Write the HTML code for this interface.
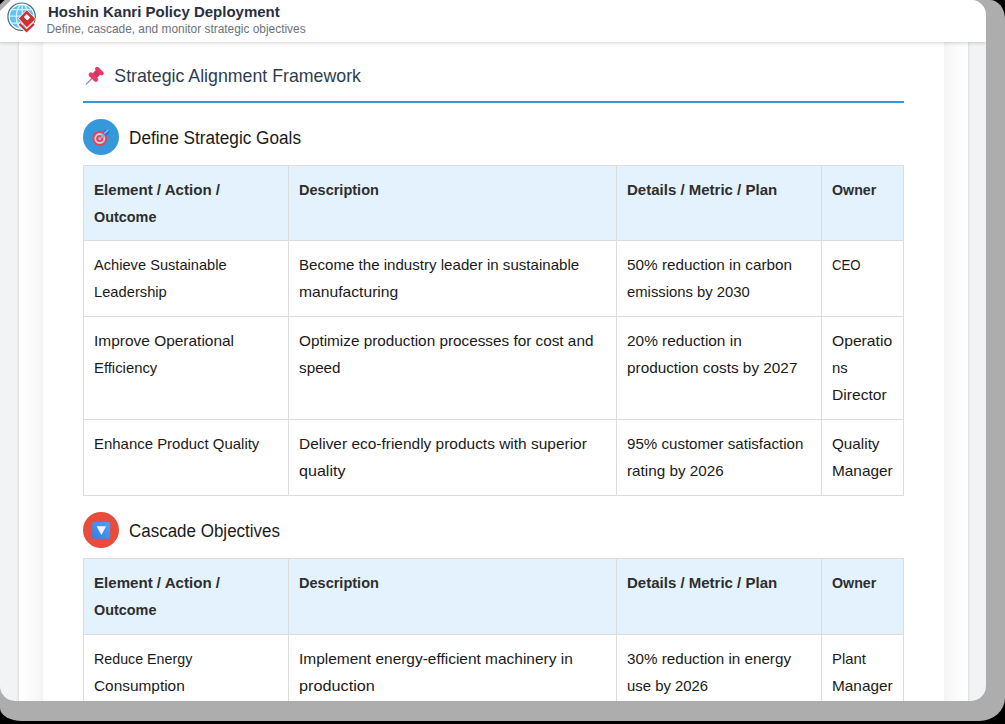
<!DOCTYPE html>
<html>
<head>
<meta charset="utf-8">
<style>
html,body{margin:0;padding:0;}
body{width:1005px;height:724px;overflow:hidden;background:#000;position:relative;font-family:"Liberation Sans",sans-serif;}
.shadow{position:absolute;left:0;top:0;width:1005px;height:720.7px;background:#adadad;border-radius:0 15px 26px 22px / 0 19px 23px 13px;}
.win{position:absolute;left:0;top:0;width:986px;height:700.7px;border-radius:0 15px 15px 15px;overflow:hidden;background:#f2f3f5;}
.pg{position:absolute;left:0;top:0;width:986px;height:700px;}
.hdr{position:absolute;left:0;top:0;width:986px;height:42px;background:#fff;box-shadow:0 1px 0 rgba(15,23,42,.02),0 2px 3px rgba(15,23,42,.12);z-index:5;}
.logo{position:absolute;left:5px;top:0;width:35px;height:35px;}
.t1{position:absolute;left:48px;top:1.5px;font-weight:bold;font-size:15.5px;line-height:20px;transform:scaleX(0.968);transform-origin:0 0;color:#283040;white-space:nowrap;}
.t2{position:absolute;left:46.5px;top:22px;font-size:11.9px;line-height:14px;color:#6b7280;white-space:nowrap;}
.cont{position:absolute;left:19px;top:0;width:949px;height:720px;background:#fff;box-shadow:0 0 3px rgba(0,0,0,.17);overflow:hidden;}
.card{position:absolute;left:24px;top:-100px;width:901px;height:900px;background:#fff;box-shadow:0 0 26px rgba(0,0,0,.09);}
.abs{position:absolute;white-space:nowrap;}
.stitle{left:114.3px;top:64px;font-size:17.75px;line-height:24px;color:#2c3e50;}
.line{position:absolute;left:83px;top:101px;width:821px;height:2px;background:#3498db;}
.circ{position:absolute;left:83px;width:36px;height:36px;border-radius:50%;}
.h3{left:129.3px;font-size:17.6px;line-height:24px;color:#1a1a1a;transform:scaleX(0.965);transform-origin:0 0;}
table{position:absolute;left:83px;width:820px;border-collapse:collapse;table-layout:fixed;font-size:15px;line-height:27px;color:#1a1a1a;}
td,th{border:1px solid #dcdcdc;padding:10px 10px 10px 10px;vertical-align:top;text-align:left;white-space:nowrap;}
th{background:#e3f2fd;font-weight:bold;color:#2e2e2e;}
tbody td{padding-bottom:11px;}
.l{display:inline-block;transform-origin:0 50%;}
.t2b th{padding-bottom:11px;}
</style>
</head>
<body>
<div class="shadow"></div>
<div class="win">
 <div class="pg">
  <div class="cont">
    <div class="card"></div>
  </div>
  <div class="hdr">
    <svg class="abs" style="left:0;top:0" width="40" height="40" viewBox="0 0 40 40">
      <defs><clipPath id="gc"><circle cx="21.6" cy="16.7" r="11.8"/></clipPath></defs>
      <circle cx="21.6" cy="16.7" r="13.7" fill="#fff" stroke="#3b7188" stroke-width="1.2"/>
      <g clip-path="url(#gc)">
        <rect x="8" y="3" width="28" height="28" fill="#62c4f0"/>
        <g stroke="#d2eefb" stroke-width="1.3" fill="none">
          <line x1="8" y1="9.6" x2="36" y2="9.6"/>
          <line x1="8" y1="16.2" x2="36" y2="16.2"/>
          <line x1="8" y1="23.1" x2="36" y2="23.1"/>
          <ellipse cx="22.3" cy="16.7" rx="6" ry="12"/>
          <line x1="22.3" y1="3" x2="22.3" y2="31"/>
        </g>
      </g>
      <path d="M26.8 9.5 L36.1 18.9 L26.8 28 L18 18.6 Z" fill="#fff"/>
      <path d="M26.8 10.3 L35.4 18.9 L26.8 27.3 L18.8 18.6 Z M26.8 14.1 L30.3 17.6 L27.3 20.6 L23.8 17.1 Z" fill="#d32f2f" fill-rule="evenodd"/>
      <path d="M18.8 23.4 L26.6 31.6 L34.6 23.4" fill="none" stroke="#fff" stroke-width="3.4" stroke-linejoin="miter"/>
      <path d="M19.5 23.9 L26.6 30.9 L33.9 23.9" fill="none" stroke="#d32f2f" stroke-width="2.2" stroke-linejoin="miter"/>
    </svg>
    <div class="t1 abs">Hoshin Kanri Policy Deployment</div>
    <div class="t2 abs">Define, cascade, and monitor strategic objectives</div>
  </div>

  <svg class="abs" style="left:82px;top:62px" width="26" height="26" viewBox="0 0 26 26">
    <g transform="translate(11.3 15.2) rotate(45)">
      <line x1="0" y1="2" x2="0" y2="9.8" stroke="#8f8ba8" stroke-width="1.4" stroke-linecap="round"/>
      <rect x="-3.2" y="-7.6" width="6.4" height="6" fill="#c93a62"/>
      <rect x="-5.8" y="-2.3" width="11.6" height="4.4" rx="2.2" fill="#ee3a6c"/>
      <rect x="-5.3" y="-10.6" width="10.6" height="4" rx="2" fill="#f0346a"/>
    </g>
  </svg>
  <div class="abs stitle">Strategic Alignment Framework</div>
  <div class="line"></div>

  <div class="circ" style="top:119px;background:#3498db"></div>
  <svg class="abs" style="left:83px;top:119px" width="36" height="36" viewBox="83 119 36 36">
    <circle cx="99.8" cy="138.5" r="7.4" fill="#e8405a"/>
    <circle cx="99.8" cy="138.5" r="5.4" fill="#dccfe2"/>
    <circle cx="99.8" cy="138.5" r="3.6" fill="#e8405a"/>
    <circle cx="99.8" cy="138.5" r="1.6" fill="#c8bcc8"/>
    <line x1="100" y1="138.3" x2="103" y2="135.3" stroke="#8a96b0" stroke-width="1"/>
    <path d="M103.4 131.6 L105.2 129.4 L107.2 130.4 L109.6 131.4 L109 133.6 L107 135.4 L104.6 134.2 Z" fill="#2f72e0"/>
    <line x1="104.2" y1="133.6" x2="108.2" y2="130" stroke="#7fd0f8" stroke-width="1.3"/>
    <circle cx="102.6" cy="136" r="1.9" fill="#5fc0f2"/>
  </svg>
  <div class="abs h3" style="top:126px;transform:scaleX(0.977)">Define Strategic Goals</div>

  <table style="top:165px">
   <colgroup><col style="width:205px"><col style="width:328px"><col style="width:205px"><col style="width:82px"></colgroup>
   <thead><tr><th><span class="l" style="transform:scaleX(1.0056)">Element / Action /</span><br><span class="l" style="transform:scaleX(0.9600)">Outcome</span></th><th><span class="l" style="transform:scaleX(0.9679)">Description</span></th><th><span class="l" style="transform:scaleX(1.0007)">Details / Metric / Plan</span></th><th><span class="l" style="transform:scaleX(0.9489)">Owner</span></th></tr></thead>
   <tbody>
    <tr><td><span class="l" style="transform:scaleX(0.9756)">Achieve Sustainable</span><br><span class="l" style="transform:scaleX(0.9808)">Leadership</span></td><td><span class="l" style="transform:scaleX(1.0061)">Become the industry leader in sustainable</span><br><span class="l" style="transform:scaleX(1.0441)">manufacturing</span></td><td><span class="l" style="transform:scaleX(1.0206)">50% reduction in carbon</span><br><span class="l" style="transform:scaleX(0.9878)">emissions by 2030</span></td><td><span class="l" style="transform:scaleX(0.8806)">CEO</span></td></tr>
    <tr><td><span class="l" style="transform:scaleX(1.0306)">Improve Operational</span><br><span class="l" style="transform:scaleX(0.9889)">Efficiency</span></td><td><span class="l" style="transform:scaleX(1.0206)">Optimize production processes for cost and</span><br><span class="l" style="transform:scaleX(1.0179)">speed</span></td><td><span class="l" style="transform:scaleX(1.0264)">20% reduction in</span><br><span class="l" style="transform:scaleX(1.0218)">production costs by 2027</span></td><td><span class="l" style="transform:scaleX(1.0446)">Operatio</span><br><span class="l" style="transform:scaleX(0.9929)">ns</span><br><span class="l" style="transform:scaleX(1.0431)">Director</span></td></tr>
    <tr><td><span class="l" style="transform:scaleX(0.9964)">Enhance Product Quality</span></td><td><span class="l" style="transform:scaleX(1.0306)">Deliver eco-friendly products with superior</span><br><span class="l" style="transform:scaleX(1.0738)">quality</span></td><td><span class="l" style="transform:scaleX(1.0069)">95% customer satisfaction</span><br><span class="l" style="transform:scaleX(1.0170)">rating by 2026</span></td><td><span class="l" style="transform:scaleX(1.0174)">Quality</span><br><span class="l" style="transform:scaleX(1.0241)">Manager</span></td></tr>
   </tbody>
  </table>

  <div class="circ" style="top:512px;background:#e74c3c"></div>
  <svg class="abs" style="left:83px;top:512px" width="36" height="36" viewBox="83 512 36 36">
    <defs><linearGradient id="bg1" x1="1" y1="0" x2="0" y2="1"><stop offset="0" stop-color="#4aa4f8"/><stop offset="1" stop-color="#2f7fe8"/></linearGradient></defs>
    <rect x="92.2" y="522" width="17.9" height="16.8" rx="1.6" fill="url(#bg1)"/>
    <path d="M96.7 526.3 L106.1 526.3 L101.4 534.9 Z" fill="#fbf2ff"/>
  </svg>
  <div class="abs h3" style="top:519px">Cascade Objectives</div>

  <table class="t2b" style="top:558px">
   <colgroup><col style="width:205px"><col style="width:328px"><col style="width:205px"><col style="width:82px"></colgroup>
   <thead><tr><th><span class="l" style="transform:scaleX(1.0056)">Element / Action /</span><br><span class="l" style="transform:scaleX(0.9600)">Outcome</span></th><th><span class="l" style="transform:scaleX(0.9679)">Description</span></th><th><span class="l" style="transform:scaleX(1.0007)">Details / Metric / Plan</span></th><th><span class="l" style="transform:scaleX(0.9489)">Owner</span></th></tr></thead>
   <tbody>
    <tr><td><span class="l" style="transform:scaleX(0.9505)">Reduce Energy</span><br><span class="l" style="transform:scaleX(1.0264)">Consumption</span></td><td><span class="l" style="transform:scaleX(1.0303)">Implement energy-efficient machinery in</span><br><span class="l" style="transform:scaleX(1.0824)">production</span></td><td><span class="l" style="transform:scaleX(1.0137)">30% reduction in energy</span><br><span class="l" style="transform:scaleX(0.9925)">use by 2026</span></td><td><span class="l" style="transform:scaleX(0.9879)">Plant</span><br><span class="l" style="transform:scaleX(1.0241)">Manager</span></td></tr>
   </tbody>
  </table>
 </div>
</div>
<svg style="position:absolute;left:0;top:0;z-index:10" width="12" height="12" viewBox="0 0 12 12"><path d="M0 0 L11 0 L0 11 Z" fill="#adadad"/><path d="M0 0 L4.6 0 L0 4.6 Z" fill="#000"/></svg>
</body>
</html>
